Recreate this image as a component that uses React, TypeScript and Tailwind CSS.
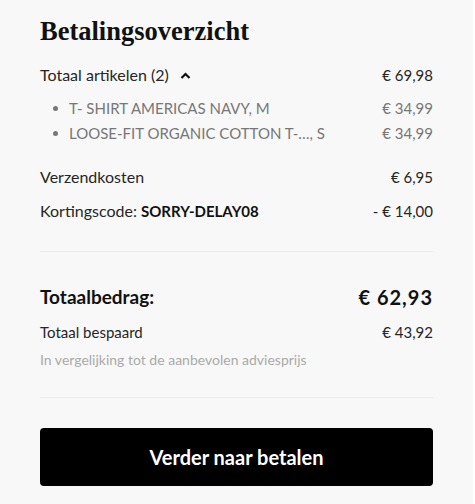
import React from "react";

const items = [
  { name: "T- SHIRT AMERICAS NAVY, M", price: "€ 34,99" },
  { name: "LOOSE-FIT ORGANIC COTTON T-…, S", price: "€ 34,99" },
];

export default function App() {
  return (
    <div className="min-h-[504px] w-[475px] bg-white">
      <div
        className="w-[473px] min-h-[504px] bg-[#f8f8f8] px-10 pt-[15px] text-[16px] text-[#262626]"
        style={{ fontFamily: "Lato, 'Open Sans', sans-serif" }}
      >
        <h2
          className="text-[26.5px] font-bold leading-[32px] text-[#111]"
          style={{ fontFamily: "'Liberation Serif', serif" }}
        >
          Betalingsoverzicht
        </h2>

        {/* artikelen */}
        <div className="mt-[18px] flex items-center justify-between leading-[20px]">
          <div className="flex items-center gap-[11px]">
            <span>Totaal artikelen (2)</span>
            <svg width="11" height="7" viewBox="0 0 11 7" fill="none">
              <path d="M1.5 6 5.5 2l4 4" stroke="#111" strokeWidth="2.2" />
            </svg>
          </div>
          <span className="text-[15px]">€ 69,98</span>
        </div>
        <ul className="mt-[13px] space-y-[5px] text-[15px] text-[#777]">
          {items.map((item) => (
            <li key={item.name} className="flex items-center justify-between leading-[20px]">
              <div className="flex items-center">
                <span className="ml-[13px] mr-[11px] h-[5px] w-[5px] rounded-full bg-[#777]" />
                <span>{item.name}</span>
              </div>
              <span>{item.price}</span>
            </li>
          ))}
        </ul>

        <div className="mt-[24px] flex justify-between leading-[20px]">
          <span>Verzendkosten</span>
          <span className="text-[15px]">€ 6,95</span>
        </div>
        <div className="mt-[14px] flex items-center justify-between leading-[20px]">
          <span>
            Kortingscode: <span className="text-[15px] font-bold text-[#111]">SORRY-DELAY08</span>
          </span>
          <span className="text-[15px]">- € 14,00</span>
        </div>

        <div className="mt-[30px] border-t border-[#ebebeb]" />

        <div className="mt-[33px] flex items-center justify-between font-bold leading-[24px] text-[#111]">
          <span className="text-[19px]">Totaalbedrag:</span>
          <span className="text-[20px] tracking-[1px]">€ 62,93</span>
        </div>
        <div className="mt-[13px] flex justify-between text-[15px] leading-[20px]">
          <span>Totaal bespaard</span>
          <span>€ 43,92</span>
        </div>
        <p className="mt-[9px] text-[14px] leading-[18px] text-[#aaa]">
          In vergelijking tot de aanbevolen adviesprijs
        </p>

        <div className="mt-[28px] border-t border-[#ebebeb]" />

        <button className="mt-[30px] flex h-[58px] w-full items-center justify-center rounded-[4px] bg-black text-[20px] font-bold text-white">
          Verder naar betalen
        </button>
      </div>
    </div>
  );
}
